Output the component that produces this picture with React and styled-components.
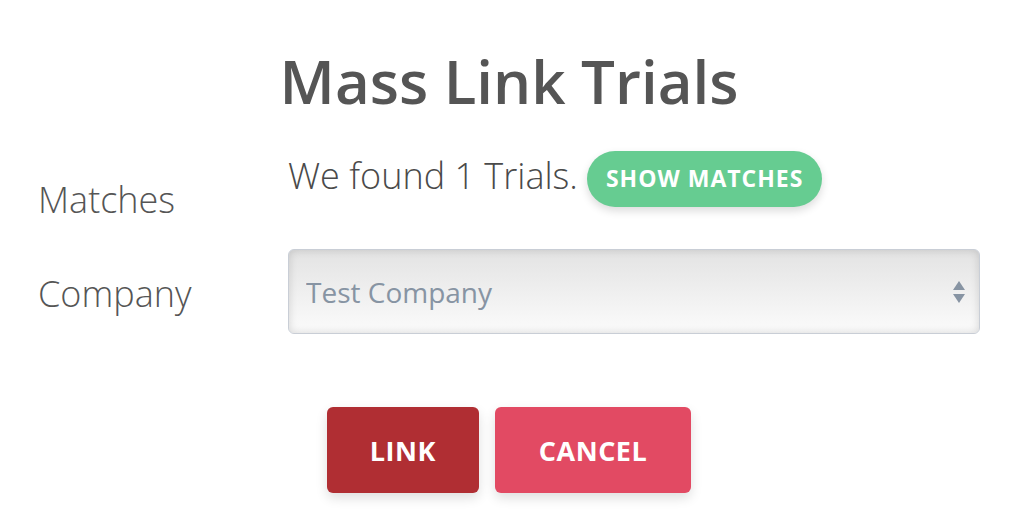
import React from "react";
import styled, { createGlobalStyle } from "styled-components";

const GlobalStyle = createGlobalStyle`
  html, body {
    margin: 0;
    padding: 0;
    background: #ffffff;
  }

  body {
    font-family: "Open Sans", "Noto Sans", sans-serif;
    -webkit-font-smoothing: antialiased;
  }
`;

const Modal = styled.div`
  width: 1020px;
  height: 530px;
  box-sizing: border-box;
  padding: 45px 40px 0 38px;
  background: #ffffff;
  overflow: hidden;
`;

const Title = styled.h1`
  margin: 0;
  text-align: center;
  font-size: 60px;
  line-height: 72px;
  font-weight: 600;
  color: #555555;
`;

const Row = styled.div`
  display: grid;
  grid-template-columns: 250px 1fr;
  align-items: ${(p) => p.$align || "start"};
  margin-top: ${(p) => p.$top}px;
`;

const Label = styled.label`
  font-size: 36px;
  line-height: 43px;
  font-weight: 300;
  color: #555555;
  margin-top: ${(p) => p.$offset || 0}px;
`;

const Found = styled.div`
  display: flex;
  align-items: flex-start;
  gap: 9px;
`;

const FoundText = styled.span`
  font-size: 36px;
  line-height: 43px;
  font-weight: 300;
  color: #4a4a4a;
  margin-top: 3px;
`;

const PillButton = styled.button`
  height: 56px;
  padding: 0 19px 2px;
  border: none;
  border-radius: 28px;
  background: #66cc91;
  color: #ffffff;
  font-family: inherit;
  font-size: 23px;
  font-weight: 700;
  letter-spacing: 1px;
  box-shadow: 0 4px 9px rgba(0, 0, 0, 0.14);
  cursor: pointer;
`;

const SelectWrap = styled.div`
  position: relative;
`;

const Select = styled.select`
  appearance: none;
  -webkit-appearance: none;
  width: 100%;
  height: 85px;
  box-sizing: border-box;
  padding: 0 50px 0 17px;
  border: 1px solid #c9ced6;
  border-radius: 6px;
  background: linear-gradient(#e3e3e3, #fbfbfb);
  box-shadow: inset 0 0 8px rgba(0, 0, 0, 0.15);
  font-family: inherit;
  font-size: 28px;
  font-weight: 400;
  color: #8794a3;
  outline: none;
`;

const Arrows = styled.svg`
  position: absolute;
  right: 14px;
  top: 50%;
  transform: translateY(-50%);
  pointer-events: none;
`;

const Actions = styled.div`
  display: flex;
  justify-content: center;
  gap: 16px;
  margin-top: 73px;
`;

const ActionButton = styled.button`
  height: 86px;
  padding: 0 ${(p) => p.$pad}px;
  border: none;
  border-radius: 6px;
  background: ${(p) => p.$color};
  color: #ffffff;
  font-family: inherit;
  font-size: 27px;
  font-weight: 700;
  letter-spacing: 0.5px;
  box-shadow: 0 5px 12px rgba(0, 0, 0, 0.13);
  cursor: pointer;
`;

const App = () => {
  return (
    <>
      <GlobalStyle />
      <Modal>
        <Title>Mass Link Trials</Title>

        <Row $top={34}>
          <Label $offset={27}>Matches</Label>
          <Found>
            <FoundText>We found 1 Trials.</FoundText>
            <PillButton>SHOW MATCHES</PillButton>
          </Found>
        </Row>

        <Row $top={28} $align="center">
          <Label $offset={3}>Company</Label>
          <SelectWrap>
            <Select defaultValue="test">
              <option value="test">Test Company</option>
            </Select>
            <Arrows width="14" height="26" viewBox="0 0 14 26">
              <path d="M7 2 L13 11 L1 11 Z" fill="#8794a3" />
              <path d="M1 15 L13 15 L7 24 Z" fill="#8794a3" />
            </Arrows>
          </SelectWrap>
        </Row>

        <Actions>
          <ActionButton $color="#b02e33" $pad={43}>LINK</ActionButton>
          <ActionButton $color="#e24a63" $pad={44}>CANCEL</ActionButton>
        </Actions>
      </Modal>
    </>
  );
};

export default App;
